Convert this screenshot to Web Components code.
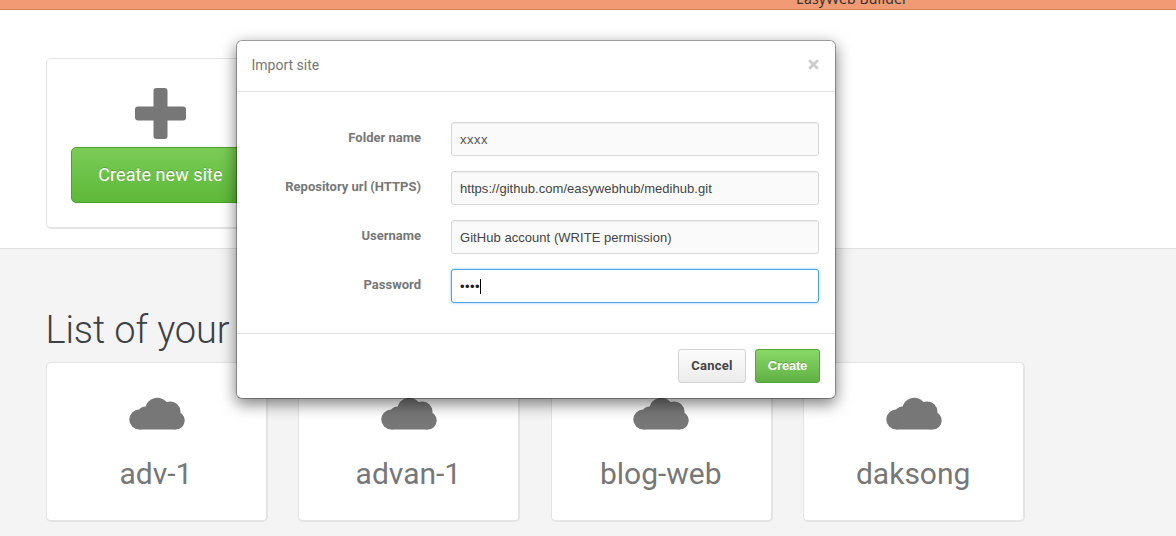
<!DOCTYPE html>
<html lang="en">
<head>
<meta charset="utf-8">
<title>EasyWeb Builder</title>
<style>
body{margin:0;height:536px;overflow:hidden;position:relative;background:#f4f4f4;font-family:Roboto,sans-serif;color:#777;font-size:13px}
</style>
</head>
<body>
<easy-page>
  <top-bar slot="bar">EasyWeb Builder</top-bar>
  <create-card slot="hero">Create new site</create-card>
  <span slot="title">List of your</span>
  <site-card>adv-1</site-card>
  <site-card>advan-1</site-card>
  <site-card>blog-web</site-card>
  <site-card>daksong</site-card>
</easy-page>
<modal-dialog>
  <span slot="title">Import site</span>
  <form-row label="Folder name" tone="light">xxxx</form-row>
  <form-row label="Repository url (HTTPS)">https://github.com/easywebhub/medihub.git</form-row>
  <form-row label="Username">GitHub account (WRITE permission)</form-row>
  <form-row label="Password" focused>••••</form-row>
  <ui-button slot="actions">Cancel</ui-button>
  <ui-button slot="actions" primary>Create</ui-button>
</modal-dialog>
<script>
function element(name, html) {
  customElements.define(name, class extends HTMLElement {
    constructor() {
      super();
      const t = document.createElement('template');
      t.innerHTML = html;
      this.attachShadow({mode: 'open'}).appendChild(t.content.cloneNode(true));
      const label = this.shadowRoot.querySelector('label');
      if (label) label.textContent = this.getAttribute('label');
    }
  });
}
element('top-bar', `<style>
:host{display:flex;justify-content:flex-start;align-items:flex-end;box-sizing:border-box;height:10px;overflow:hidden;padding-left:796px;background:#f19a73;border-bottom:1px solid #d4835f;color:#333;font:14px/20px "Noto Sans",sans-serif;letter-spacing:.15px}
span{display:block;height:20px}
</style><span><slot></slot></span>`);
element('easy-page', `<style>
:host{display:block}
.hero{box-sizing:border-box;height:239px;padding:48px 46px 0;background:#fff;border-bottom:1px solid #e1e1e1}
h1{margin:0;padding:56px 46px 0 45.5px;font:300 38px/50px Roboto,sans-serif;color:#3c4146;height:57px;letter-spacing:-.1px}
.list{display:grid;grid-template-columns:repeat(4,222px);column-gap:30.4px;padding:0 46px}
</style><slot name="bar"></slot><div class="hero"><slot name="hero"></slot></div>
<h1><slot name="title"></slot></h1><div class="list"><slot></slot></div>`);
element('create-card', `<style>
:host{display:flex;flex-direction:column;align-items:center;box-sizing:border-box;width:229px;height:171px;padding-top:29px;background:#fff;border:1px solid #e4e4e4;border-bottom:2px solid #e4e4e4;border-radius:5px}
svg{display:block;flex:none}
.btn{box-sizing:border-box;margin-top:8px;width:179px;height:56px;border:1px solid #4fa02f;border-radius:5px;background:linear-gradient(#7bcc57,#5db838);color:#fff;font:400 18px/53px Roboto,sans-serif;letter-spacing:.06px;text-align:center;text-shadow:0 -1px 0 rgba(0,0,0,.2);white-space:nowrap}
</style><svg width="51" height="51" viewBox="0 0 51 51" fill="#777"><rect x="18.5" width="14" height="51" rx="3"/><rect y="18.5" width="51" height="14" rx="3"/></svg>
<div class="btn"><slot></slot></div>`);
element('site-card', `<style>
:host{display:flex;flex-direction:column;align-items:center;box-sizing:border-box;height:160px;padding:34px 1px 0 0;background:#fff;border:1px solid #e4e4e4;border-right-width:2px;border-bottom-width:2px;border-radius:5px;font:30px/40px Roboto,sans-serif;color:#777}
svg{display:block;flex:none;margin-left:1.2px}
div{margin-top:23px}
</style><svg width="56" height="34" viewBox="128 397 56 34" fill="#777"><circle cx="138.3" cy="419.5" r="10"/><circle cx="144.5" cy="414.5" r="8"/><circle cx="156.3" cy="409.8" r="12"/><circle cx="169" cy="412" r="10.6"/><circle cx="174.6" cy="420.5" r="9.1"/><rect x="138.3" y="412" width="36.3" height="17.5"/></svg>
<div><slot></slot></div>`);
element('form-row', `<style>
:host{display:flex;align-items:flex-start;height:34px;margin-bottom:15px}
label{width:184px;text-align:right;font:700 13px/18px Roboto,sans-serif;padding-top:7px;color:#777}
.field{box-sizing:border-box;margin-left:30px;width:368px;height:34px;padding:1px 8px 0;border:1px solid #d9d9d9;border-radius:3px;background:#fafafa;box-shadow:inset 0 1px 1px rgba(0,0,0,.06);font:13px/32px "Liberation Sans",Arial,sans-serif;letter-spacing:.045px;color:#444;display:flex}
:host([tone=light]) .field{color:#555;letter-spacing:.5px}
:host([focused]) .field{background:#fff;border-color:#4da3e8;box-shadow:0 0 3px rgba(77,163,232,.6);color:#222;letter-spacing:.45px}
i{display:none;width:1px;height:15px;background:#000;margin-top:8px}
:host([focused]) i{display:block}
</style><label></label><div class="field"><span><slot></slot></span><i></i></div>`);
element('ui-button', `<style>
:host{display:block;box-sizing:border-box;width:68px;height:34px;border:1px solid #d2d2d2;border-radius:3px;background:linear-gradient(#fcfcfc,#ececec);color:#444;font:700 13px/32px Roboto,sans-serif;letter-spacing:.25px;text-align:center}
:host([primary]){width:65px;border-color:#51a33a;background:linear-gradient(#89d968,#60b044);color:#fff;font-family:"Liberation Sans",Arial,sans-serif;letter-spacing:-.2px;text-shadow:0 -1px 0 rgba(0,0,0,.2)}
</style><slot></slot>`);
element('modal-dialog', `<style>
:host{position:absolute;left:236px;top:40px;width:600px;height:359px;box-sizing:border-box;display:flex;flex-direction:column;background:#fff;background-clip:padding-box;border:1px solid rgba(0,0,0,.3);border-radius:6px;box-shadow:0 5px 15px rgba(0,0,0,.5)}
header{display:flex;justify-content:space-between;box-sizing:border-box;height:51px;padding:14px 16px 0 14.5px;border-bottom:1px solid #e3e3e3;font:14px/20px Roboto,sans-serif;color:#777}
svg{margin-top:4px}
main{box-sizing:border-box;height:242px;padding:30px 0 0;border-bottom:1px solid #e3e3e3}
footer{display:flex;justify-content:flex-end;gap:9px;padding:15px 15px 0}
</style><header><slot name="title"></slot><svg width="11" height="11" viewBox="0 0 11 11"><path d="M1.2 1.2l8.6 8.6M9.8 1.2L1.2 9.8" stroke="#ccc" stroke-width="2.8"/></svg></header>
<main><slot></slot></main><footer><slot name="actions"></slot></footer>`);
</script>
</body>
</html>
